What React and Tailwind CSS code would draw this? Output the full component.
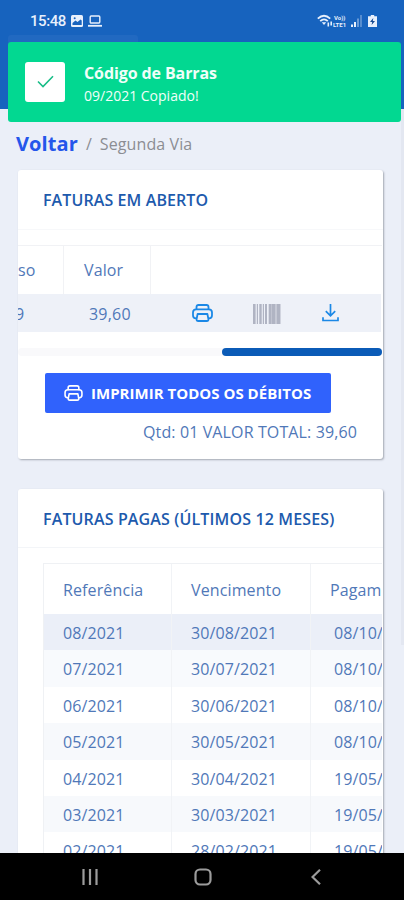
import React from "react";

const paid = [
  ["08/2021", "30/08/2021", "08/10/2021"],
  ["07/2021", "30/07/2021", "08/10/2021"],
  ["06/2021", "30/06/2021", "08/10/2021"],
  ["05/2021", "30/05/2021", "08/10/2021"],
  ["04/2021", "30/04/2021", "19/05/2021"],
  ["03/2021", "30/03/2021", "19/05/2021"],
  ["02/2021", "28/02/2021", "19/05/2021"],
];

const rowColors = ["bg-[#ebeff8]", "bg-[#f8fafd]", "bg-white", "bg-[#f7f9fc]", "bg-white", "bg-[#f7f9fc]", "bg-white"];

function Printer({ className }) {
  return (
    <svg className={className} viewBox="0 0 21 18" fill="none" stroke="currentColor" strokeWidth="1.8" strokeLinejoin="round">
      <path d="M4.5 6V3Q4.5 1 6.5 1h8q2 0 2 2v3" />
      <path d="M4.6 14.4H4Q1 14.2 1 11.2V8.6Q1 5.4 4.2 5.4h12.6Q20 5.4 20 8.6v2.6q0 3-3 3.2h-.6" />
      <path d="M5.6 10h9.8l1 5.2q.2 1.8-1.6 1.8H6.2q-1.8 0-1.6-1.8z" />
    </svg>
  );
}

function Barcode() {
  return (
    <svg className="block h-[20px] w-[28px]" viewBox="0 0 28 20" fill="#b0b4c3">
      <rect x="0" width="2.6" height="20" />
      <rect x="3.8" width="1.2" height="20" />
      <rect x="6.3" width="2.4" height="20" />
      <rect x="9.8" width="1.2" height="20" />
      <rect x="12" width="2" height="20" />
      <rect x="15.5" width="12" height="20" fill="#c6c9d5" />
      <rect x="16" width="2.2" height="20" />
      <rect x="19" width="3" height="20" />
      <rect x="24" width="3.2" height="20" />
    </svg>
  );
}

function StatusBar() {
  return (
    <div className="flex h-[35px] items-center pl-[30px] pt-[7px] font-['Roboto',sans-serif] text-[15px] font-medium text-[#e8f0fc]">
      <span className="w-[41px] tracking-[-0.45px]">15:48</span>
      <svg className="h-3 w-3" viewBox="0 0 12 12">
        <rect width="12" height="12" rx="1.5" fill="#e8f0fc" />
        <path d="M1.5 10V8l3-2.5 2 1.5 3-2.5 1.2 1V10z" fill="#1763be" />
        <circle cx="3.7" cy="3.2" r="1" fill="#1763be" />
      </svg>
      <svg className="ml-[5px] h-3 w-[14px]" viewBox="0 0 14 12" fill="none" stroke="#e8f0fc" strokeWidth="1.4">
        <rect x="2.2" y="1" width="9.6" height="7" rx="1" />
        <path d="M0 10.8h14" strokeWidth="1.8" />
      </svg>
      <svg className="ml-auto h-[14px] w-[16px]" viewBox="0 0 16 14" fill="none" stroke="#e8f0fc" strokeWidth="1.8">
        <path d="M.8 4.6Q7 -1 13.2 4.6M3.2 7.2Q7 3.6 10.8 7.2" />
        <path d="M4.8 8.3h4.4L7 11z" fill="#e8f0fc" stroke="none" />
        <path d="M11.3 12.5v-4M14.2 7.5v4" strokeWidth="1.6" />
      </svg>
      <span className="flex w-[17px] flex-col text-[6px] font-bold leading-[7px]">
        <span className="pl-px">Vo))</span>
        <span>LTE1</span>
      </span>
      <svg className="ml-px mr-[5px] h-3 w-3" viewBox="0 0 12 12" fill="#e8f0fc">
        <rect x="0" y="9.5" width="2" height="2.5" />
        <rect x="3" y="7" width="2" height="5" />
        <rect x="6" y="3.5" width="2" height="8.5" opacity=".4" />
        <rect x="9" y="0" width="2" height="12" opacity=".3" />
      </svg>
      <svg className="mr-[27px] h-3 w-[9px]" viewBox="0 0 9 12">
        <path d="M2.8 0h3.4v1.2H9V12H0V1.2h2.8z" fill="#e8f0fc" />
        <path d="M5.3 3L2 7h2.2l-.6 3L7 6H4.8z" fill="#174a91" />
      </svg>
    </div>
  );
}

function Toast() {
  return (
    <div className="absolute left-[8px] top-[42px] flex h-[80px] w-[393px] items-center rounded-[3px] bg-[#02d891] pl-[17px] text-white">
      <div className="flex h-10 w-10 items-center justify-center rounded-[3px] bg-white">
        <svg className="h-4 w-[17px]" viewBox="0 0 17 16" fill="none" stroke="#18bd87" strokeWidth="1.6">
          <path d="M1 7.5l5 5L16 2.2" />
        </svg>
      </div>
      <div className="ml-[19px] pt-[3px] text-[#f0fff9]">
        <div className="text-[16px] font-bold leading-6 tracking-[-0.1px]">Código de Barras</div>
        <div className="text-[14px] leading-[22px]">09/2021 Copiado!</div>
      </div>
    </div>
  );
}

export default function App() {
  return (
    <div className="relative flex h-[900px] w-[404px] flex-col overflow-hidden bg-[#ebeff8] font-['Open_Sans','Noto_Sans',sans-serif] text-[16px] text-[#5078b8]">
      <header className="h-[109px] shrink-0 bg-[#1763be]">
        <StatusBar />
        <div className="ml-2 h-5 w-[130px] rounded-[3px] bg-[#2169c1]" />
      </header>
      <Toast />
      <main className="flex min-h-0 flex-1 flex-col overflow-hidden pl-[18px]">
        <nav className="-ml-0.5 flex h-[61px] shrink-0 items-center pt-[8px]">
          <span className="text-[20px] font-bold tracking-[0.1px] text-[#2456eb]">Voltar</span>
          <span className="ml-2 text-[#8b8d93]">/</span>
          <span className="ml-2 tracking-[0.1px] text-[#8b8d93]">Segunda Via</span>
        </nav>

        <section className="h-[289px] w-[365px] shrink-0 overflow-hidden rounded-[3px] bg-white shadow-[1px_1px_2px_#a3a8b2]">
          <h2 className="h-[60px] border-b border-[#f7f8fa] pl-[25px] pt-[18px] text-[16px] font-semibold leading-6 tracking-[0.1px] text-[#1d5aad]">FATURAS EM ABERTO</h2>
          <div className="mt-[15px] flex h-[49px] w-[364px] border-t border-[#f1f2f5] leading-[49px]">
            <div className="w-[46px] border-r border-[#f1f2f5]">so</div>
            <div className="w-[87px] border-r border-[#f1f2f5] pl-5 tracking-[0.1px]">Valor</div>
          </div>
          <div className="flex h-[38px] w-[363px] items-center bg-[#eef1f8]">
            <div className="flex w-[71px] overflow-hidden pt-0.5"><span className="-ml-[3px]">9</span></div>
            <div className="w-[103px] pt-0.5 tracking-[0.2px]">39,60</div>
            <Printer className="h-[18px] w-[21px] text-[#1b88e6]" />
            <span className="ml-[40px] mt-0.5"><Barcode /></span>
            <svg className="ml-[41px] h-[18px] w-[17px]" viewBox="0 0 17 18" fill="none" stroke="#1b88e6" strokeWidth="1.7">
              <path d="M8.5 0v11.5M3.8 7.2l4.7 4.6 4.7-4.6M1 13.2v3.3h15v-3.3" />
            </svg>
          </div>
          <div className="mt-[16px] flex h-2 w-[364px] justify-end rounded bg-[#f9f9fb]">
            <div className="h-2 w-[160px] rounded-full bg-[#0b5bb7]" />
          </div>
          <button className="ml-[27px] mt-[17px] flex h-[40px] w-[286px] items-center rounded-[2px] bg-[#3062fc] pl-[19px] text-[15px] font-bold text-white">
            <Printer className="mr-[8px] h-[16px] w-[19px]" />
            <span className="tracking-[0.02px]">IMPRIMIR TODOS OS DÉBITOS</span>
          </button>
          <p className="mt-[7px] pr-[26px] text-right leading-6 tracking-[0.12px]">Qtd: 01 VALOR TOTAL: 39,60</p>
        </section>

        <section className="mt-[30px] h-[400px] w-[365px] shrink-0 overflow-hidden rounded-[3px] bg-white shadow-[1px_1px_2px_#a3a8b2]">
          <h2 className="h-[59px] border-b border-[#f3f5f8] pl-[25px] pt-[18px] text-[16px] font-semibold leading-6 tracking-[0.14px] text-[#1d5aad]">FATURAS PAGAS (ÚLTIMOS 12 MESES)</h2>
          <div className="ml-[25px] mt-[15px] w-[339px] overflow-hidden border-l border-t border-[#eff1f4]">
            <div className="flex h-[50px] w-[420px] leading-[52px] tracking-[0.12px]">
              <div className="w-[128px] border-r border-[#f1f3f6] pl-[19px]">Referência</div>
              <div className="w-[139px] border-r border-[#f1f3f6] pl-[19px]">Vencimento</div>
              <div className="pl-[19px]">Pagamento</div>
            </div>
            {paid.map((r, i) => (
              <div key={r[0]} className={`flex h-[36.4px] w-[420px] leading-[38px] tracking-[0.12px] ${rowColors[i]}`}>
                <div className="w-[128px] border-r border-[#f1f3f6] pl-[19px]">{r[0]}</div>
                <div className="w-[139px] border-r border-[#f1f3f6] pl-[19px]">{r[1]}</div>
                <div className="pl-[23px]">{r[2]}</div>
              </div>
            ))}
          </div>
        </section>
      </main>
      <div className="absolute right-0 top-[109px] h-[536px] w-[3px] bg-[#e3e7f1]" />
      <footer className="flex h-[47px] shrink-0 items-center justify-between bg-black pl-[82px] pr-[83px] text-[#9c9c9c]">
        <svg className="h-4 w-4" viewBox="0 0 16 16" stroke="currentColor" strokeWidth="2.2">
          <path d="M1.5 0v16M8 0v16M14.5 0v16" />
        </svg>
        <svg className="-ml-[3px] h-[18px] w-[18px]" viewBox="0 0 18 18" fill="none" stroke="currentColor" strokeWidth="2.2">
          <rect x="1.5" y="1.5" width="15" height="15" rx="4.5" />
        </svg>
        <svg className="h-4 w-[10px]" viewBox="0 0 10 16" fill="none" stroke="currentColor" strokeWidth="2.2">
          <path d="M9 .8L1.5 8 9 15.2" />
        </svg>
      </footer>
    </div>
  );
}
